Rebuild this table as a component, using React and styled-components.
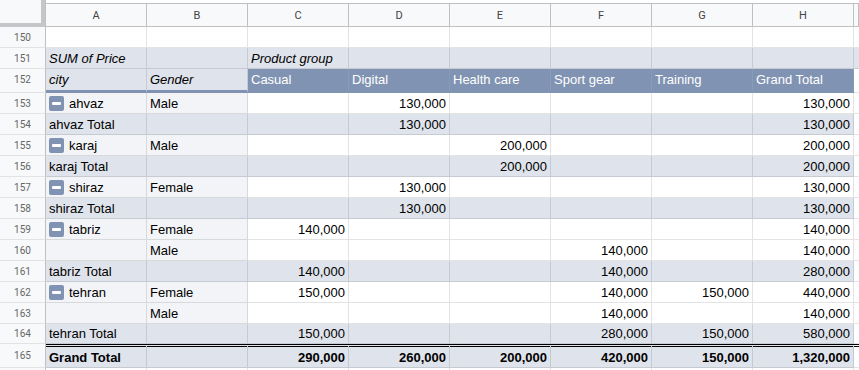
import React from "react";
import styled, {createGlobalStyle, css} from "styled-components";

const GlobalStyle = createGlobalStyle`
  html, body {
    margin: 0;
    background: #fff;
    overflow: hidden;
  }
  * {
    box-sizing: border-box;
  }
`;

const BAND = "#dfe3eb";
const LABEL = "#f3f4f7";
const HEAD = "#8193b2";
const GRID = "rgba(0, 0, 0, 0.11)";

const Sheet = styled.div`
  width: 859px;
  height: 370px;
  overflow: hidden;
  font-family: "Liberation Sans", Arial, sans-serif;
  font-size: 13px;
  color: #000;
`;

const HeaderRow = styled.div`
  display: flex;
  align-items: flex-end;
  height: 27px;
`;

const Corner = styled.div`
  width: 46px;
  height: 27px;
  flex: none;
  background: #f8f9fa;
  border-right: 1px solid #c0c0c0;
  box-shadow: inset -4px -4px 0 #c4c6c9;
`;

const ColHead = styled.div`
  width: ${({$w}) => ($w ? $w + "px" : "auto")};
  flex: ${({$w}) => ($w ? "none" : "1")};
  height: 24px;
  background: #f8f9fa;
  border-top: 1px solid #c0c0c0;
  border-bottom: 1px solid #c0c0c0;
  border-right: 1px solid #c0c0c0;
  display: flex;
  align-items: center;
  justify-content: center;
  font-family: Roboto, "Liberation Sans", sans-serif;
  font-size: 11px;
  color: #444;
`;

const Row = styled.div`
  display: flex;
  height: ${({$h}) => $h + "px"};
`;

const RowHead = styled.div`
  width: 46px;
  flex: none;
  background: #f8f9fa;
  border-right: 1px solid #c0c0c0;
  border-bottom: 1px solid #e3e3e3;
  display: flex;
  align-items: center;
  justify-content: center;
  padding-bottom: ${({$pb}) => ($pb || 0) + "px"};
  font-family: Roboto, "Liberation Sans", sans-serif;
  font-size: 10px;
  color: #666;
`;

const tones = {
  plain: css`background: #fff;`,
  label: css`background: ${LABEL};`,
  band: css`background: ${BAND};`,
  head: css`
    background: ${HEAD};
    color: #fff;
    border-right-color: rgba(255, 255, 255, 0.08);
  `,
};

const Cell = styled.div`
  width: ${({$fill}) => ($fill ? "auto" : "101px")};
  flex: ${({$fill}) => ($fill ? "1" : "none")};
  border-right: 1px solid ${GRID};
  border-bottom: 1px solid ${GRID};
  padding: 0 3px;
  display: flex;
  align-items: center;
  justify-content: ${({$num}) => ($num ? "flex-end" : "flex-start")};
  white-space: nowrap;
  overflow: hidden;
  font-style: ${({$italic}) => ($italic ? "italic" : "normal")};
  font-weight: ${({$bold}) => ($bold ? 700 : 400)};
  ${({$tone}) => tones[$tone]};
  ${({$thick}) => $thick && css`border-bottom: 3px solid ${HEAD};`}
  ${({$double}) => $double && css`border-top: 3px double #000;`}
`;

const Toggle = styled.span`
  position: relative;
  width: 15px;
  height: 15px;
  flex: none;
  margin-right: 5px;
  border-radius: 2px;
  background: ${HEAD};

  &:after {
    content: "";
    position: absolute;
    left: 3px;
    right: 3px;
    top: 6px;
    height: 3px;
    background: #fff;
    border-radius: 1px;
  }
`;

const COLS = ["A", "B", "C", "D", "E", "F", "G", "H"];

// the last row only peeks in at the bottom edge, so it gets no number
const ROWS = [
  {n: 150, kind: "blank", cells: []},
  {n: 151, kind: "title", cells: ["SUM of Price", "", "Product group"]},
  {n: 152, kind: "fields", cells: ["city", "Gender", "Casual", "Digital", "Health care", "Sport gear", "Training", "Grand Total"]},
  {n: 153, kind: "data", toggle: true, cells: ["ahvaz", "Male", "", "130,000", "", "", "", "130,000"]},
  {n: 154, kind: "total", cells: ["ahvaz Total", "", "", "130,000", "", "", "", "130,000"]},
  {n: 155, kind: "data", toggle: true, cells: ["karaj", "Male", "", "", "200,000", "", "", "200,000"]},
  {n: 156, kind: "total", cells: ["karaj Total", "", "", "", "200,000", "", "", "200,000"]},
  {n: 157, kind: "data", toggle: true, cells: ["shiraz", "Female", "", "130,000", "", "", "", "130,000"]},
  {n: 158, kind: "total", cells: ["shiraz Total", "", "", "130,000", "", "", "", "130,000"]},
  {n: 159, kind: "data", toggle: true, cells: ["tabriz", "Female", "140,000", "", "", "", "", "140,000"]},
  {n: 160, kind: "data", cells: ["", "Male", "", "", "", "140,000", "", "140,000"]},
  {n: 161, kind: "total", cells: ["tabriz Total", "", "140,000", "", "", "140,000", "", "280,000"]},
  {n: 162, kind: "data", toggle: true, cells: ["tehran", "Female", "150,000", "", "", "140,000", "150,000", "440,000"]},
  {n: 163, kind: "data", cells: ["", "Male", "", "", "", "140,000", "", "140,000"]},
  {n: 164, kind: "total", cells: ["tehran Total", "", "150,000", "", "", "280,000", "150,000", "580,000"]},
  {n: 165, kind: "grand", cells: ["Grand Total", "", "290,000", "260,000", "200,000", "420,000", "150,000", "1,320,000"]},
  {n: 166, kind: "blank", hideNumber: true, cells: []},
];

const heights = {152: 24, 164: 20, 165: 24};

const toneFor = (kind, i) => {
  if (kind === "title" || kind === "total" || kind === "grand") return "band";
  if (kind === "fields") return i < 2 ? "band" : "head";
  if (kind === "data") return i < 2 ? "label" : "plain";
  return "plain";
};

const SheetRow = ({row}) => {
  const {n, kind, cells, toggle, hideNumber} = row;
  const h = heights[n] || 21;

  return (
    <Row $h={h}>
      <RowHead $pb={kind === "fields" ? 3 : 0}>{hideNumber ? "" : n}</RowHead>
      {COLS.map((c, i) => {
        const value = cells[i] || "";
        return (
          <Cell
            key={c}
            $tone={toneFor(kind, i)}
            $num={i >= 2 && kind !== "fields" && kind !== "title"}
            $italic={kind === "title" || (kind === "fields" && i < 2)}
            $bold={kind === "grand"}
            $thick={kind === "fields"}
            $double={kind === "grand"}
          >
            {i === 0 && toggle && <Toggle/>}
            {value}
          </Cell>
        );
      })}
      <Cell $fill $tone={kind === "title" ? "band" : "plain"} $double={kind === "grand"}/>
    </Row>
  );
};

const App = () => {
  return (
    <Sheet>
      <GlobalStyle/>
      <HeaderRow>
        <Corner/>
        {COLS.map((c) => (
          <ColHead key={c} $w={101}>{c}</ColHead>
        ))}
        <ColHead/>
      </HeaderRow>
      {ROWS.map((row) => (
        <SheetRow key={row.n} row={row}/>
      ))}
    </Sheet>
  );
};

export default App;
